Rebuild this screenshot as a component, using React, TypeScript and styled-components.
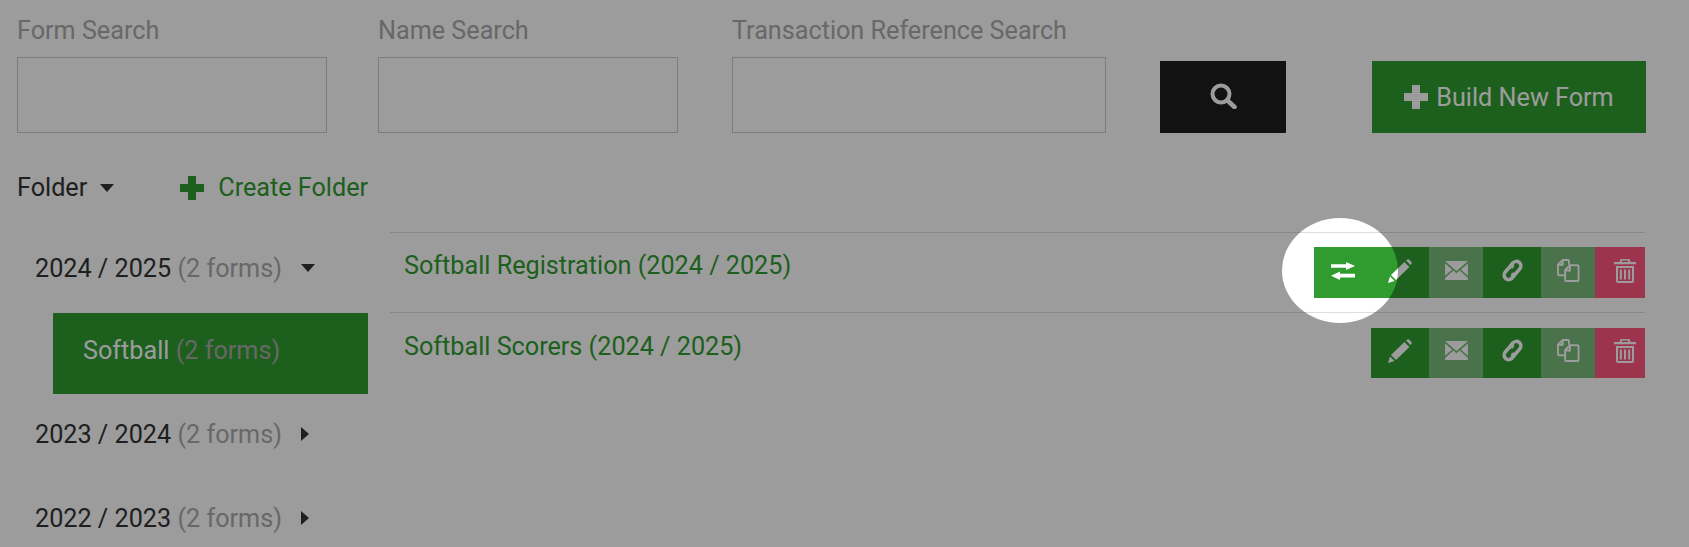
import React from "react";
import styled, { createGlobalStyle } from "styled-components";

const GlobalStyle = createGlobalStyle`
  html, body { margin: 0; padding: 0; background: #fff; }
  body { font-family: Roboto, "Liberation Sans", sans-serif; color: #333; }
`;

const GREEN = "#309c30";

const PlusIcon = ({ size }: { size: number }) => (
  <svg width={size} height={size} viewBox="0 0 24 24" fill="currentColor">
    <path d="M8 0h8v8h8v8h-8v8H8v-8H0V8h8z" />
  </svg>
);

const SearchIcon = () => (
  <svg width="27" height="26" viewBox="0 0 27 26" fill="none" stroke="currentColor">
    <circle cx="11" cy="11" r="8.500" strokeWidth="4" />
    <path d="M18 18l6.500 6" strokeWidth="4.600" strokeLinecap="round" />
  </svg>
);

const TransferIcon = () => (
  <svg width="24" height="18" viewBox="0 0 24 18" fill="currentColor">
    <path d="M0 2.200h15V0l9 4-9 4V5.800H0zM24 11.700H9V9.500L0 13.700l9 4.300v-2.500h15z" />
  </svg>
);

const PencilIcon = () => (
  <svg width="24" height="24" viewBox="0 0 24 24" fill="currentColor">
    <path d="M18 1.600l1.400-1a1.600 1.600 0 0 1 2 .2l2 2.200a1.400 1.400 0 0 1 0 1.900l-1 1.200zM16.400 3l5 5L8 21l-5-5zM2 17.600L6.600 22 0 24z" />
  </svg>
);

const MailIcon = () => (
  <svg width="23" height="19" viewBox="0 0 24 20" fill="currentColor">
    <path d="M0 0h24L12 10.500zM0 2.500l7.400 6.400L0 15.500zM24 2.500v13l-7.400-6.600zM8.600 10L12 13l3.400-3L24 18v2H0v-2z" />
  </svg>
);

const LinkIcon = () => (
  <svg width="27" height="27" viewBox="0 0 27 27" fill="none" stroke="currentColor" strokeWidth="3.600">
    <g transform="rotate(40 13.500 13.500)">
      <path d="M9 12V7.500a4.500 4.500 0 0 1 9 0v5.500a4.500 4.500 0 0 1-3 4.200" />
      <path d="M18 15v4.500a4.500 4.500 0 0 1-9 0V14a4.500 4.500 0 0 1 3-4.200" />
    </g>
  </svg>
);

const CopyIcon = () => (
  <svg width="24" height="23" viewBox="0 0 24 24" fill="none" stroke="currentColor" strokeWidth="2">
    <path d="M9 17H2.500a1 1 0 0 1-1-1V6l5-5h5.500a1 1 0 0 1 1 1v4M6.500 1.500V6H2" />
    <path d="M10 23a1 1 0 0 1-1-1V11.500l5-5h8a1 1 0 0 1 1 1V22a1 1 0 0 1-1 1zM14 7v5H9.500" />
  </svg>
);

const TrashIcon = () => (
  <svg width="22" height="24" viewBox="0 0 22 24" fill="currentColor">
    <path d="M6.500 0h9l1 3H22v2.200H0V3h5.500zM8 1.500L7.600 3h6.800L14 1.500zM2 7h18v15a2 2 0 0 1-2 2H4a2 2 0 0 1-2-2zm2 2v12.500a.5.5 0 0 0 .5.5h13a.5.5 0 0 0 .5-.5V9zm1.800 1.500h2v10h-2zm4.200 0h2v10h-2zm4.200 0h2v10h-2z" />
  </svg>
);

const Page = styled.div`
  position: relative;
  height: 547px;
  overflow: hidden;
  padding: 0 43px 0 17px;
`;

const SearchBar = styled.form`
  display: flex;
  align-items: flex-end;
  height: 133px;
`;

const Field = styled.div<{ $width: number; $gap: number }>`
  width: ${(p) => p.$width}px;
  margin-right: ${(p) => p.$gap}px;
`;

const Label = styled.label`
  display: block;
  font-size: 25.200px;
  line-height: 28px;
  color: #aaa;
  margin-bottom: 12px;
`;

const Input = styled.input`
  display: block;
  box-sizing: border-box;
  width: 100%;
  height: 76px;
  border: 1px solid #ccc;
  background: #fff;
`;

const SearchButton = styled.button`
  display: flex;
  align-items: center;
  justify-content: center;
  width: 126px;
  height: 72px;
  margin-right: 86px;
  padding: 0 0 3px;
  border: 0;
  background: #1e1e1e;
  color: #fff;
`;

const BuildButton = styled.button`
  display: flex;
  align-items: center;
  justify-content: center;
  gap: 8px;
  width: 274px;
  height: 72px;
  padding: 0;
  border: 0;
  background: ${GREEN};
  color: #fff;
  font: 25.200px Roboto, sans-serif;
`;

const Layout = styled.div`
  display: grid;
  grid-template-columns: 373px 1fr;
`;

const FolderHeader = styled.div`
  grid-column: 1 / 3;
  display: flex;
  align-items: center;
  box-sizing: border-box;
  height: 99px;
  padding-top: 10px;
  font-size: 25.200px;
`;

const Caret = styled.span<{ $right?: boolean }>`
  display: inline-block;
  width: 0;
  height: 0;
  ${(p) =>
    p.$right
      ? "border-top: 7px solid transparent; border-bottom: 7px solid transparent; border-left: 8px solid #333;"
      : "border-left: 7px solid transparent; border-right: 7px solid transparent; border-top: 8px solid #333;"}
`;

const FolderToggle = styled.span`
  display: flex;
  align-items: center;
  gap: 13px;
  margin-right: 66px;
`;

const CreateFolder = styled.a`
  display: flex;
  align-items: center;
  gap: 14px;
  color: ${GREEN};
`;

const Tree = styled.ul`
  list-style: none;
  margin: -6px 0 0;
  padding: 0;
`;

const TreeRow = styled.li`
  display: flex;
  align-items: center;
  gap: 19px;
  height: 84px;
  padding-left: 18px;
  font-size: 25.200px;
`;

const Count = styled.span`
  color: #aaa;
`;

const ActiveFolder = styled.li`
  display: flex;
  align-items: center;
  box-sizing: border-box;
  height: 81px;
  margin: 3px 0 -2px 36px;
  width: 315px;
  padding: 0 0 6px 30px;
  background: ${GREEN};
  color: #fff;
  font-size: 25.200px;
`;

const FormList = styled.div`
  display: flex;
  flex-direction: column;
  margin-right: 1px;
`;

const FormRow = styled.div`
  display: flex;
  justify-content: space-between;
  box-sizing: border-box;
  height: 80.300px;
  padding-top: 14.400px;
  border-top: 1px solid #ddd;
`;

const FormTitle = styled.a`
  margin-left: 14px;
  font-size: 25.200px;
  line-height: 38px;
  color: ${GREEN};
`;

const Actions = styled.div`
  display: flex;
  height: 50.600px;
`;

const Action = styled.button<{ $bg: string; $width: number; $shift?: number }>`
  display: flex;
  align-items: center;
  justify-content: center;
  box-sizing: border-box;
  width: ${(p) => p.$width}px;
  padding: 0 0 4px ${(p) => p.$shift || 0}px;
  border: 0;
  background: ${(p) => p.$bg};
  color: #fff;
`;

const Spotlight = styled.div`
  position: absolute;
  left: 1282px;
  top: 218px;
  width: 116px;
  height: 105px;
  border-radius: 50%;
  box-shadow: 0 0 0 2000px rgba(0, 0, 0, 0.39);
  pointer-events: none;
`;

const ActionButtons = ({ transfer }: { transfer?: boolean }) => (
  <Actions>
    {transfer && (
      <Action $bg={GREEN} $width={57} type="button">
        <TransferIcon />
      </Action>
    )}
    <Action $bg={GREEN} $width={58} type="button">
      <PencilIcon />
    </Action>
    <Action $bg="#7bbd7b" $width={54} type="button">
      <MailIcon />
    </Action>
    <Action $bg={GREEN} $width={58} type="button">
      <LinkIcon />
    </Action>
    <Action $bg="#7bbd7b" $width={54} type="button">
      <CopyIcon />
    </Action>
    <Action $bg="#ff5680" $width={50} $shift={10} type="button">
      <TrashIcon />
    </Action>
  </Actions>
);

export default function App() {
  return (
    <Page>
      <GlobalStyle />
      <SearchBar>
        <Field $width={310} $gap={51}>
          <Label>Form Search</Label>
          <Input />
        </Field>
        <Field $width={300} $gap={54}>
          <Label>Name Search</Label>
          <Input />
        </Field>
        <Field $width={374} $gap={54}>
          <Label>Transaction Reference Search</Label>
          <Input />
        </Field>
        <SearchButton type="button">
          <SearchIcon />
        </SearchButton>
        <BuildButton type="button">
          <PlusIcon size={24} />
          Build New Form
        </BuildButton>
      </SearchBar>
      <Layout>
        <FolderHeader>
          <FolderToggle>
            Folder <Caret />
          </FolderToggle>
          <CreateFolder>
            <PlusIcon size={24} />
            Create Folder
          </CreateFolder>
        </FolderHeader>
        <Tree>
          <TreeRow>
            <span>
              2024 / 2025 <Count>(2 forms)</Count>
            </span>
            <Caret />
          </TreeRow>
          <ActiveFolder>
            <span>
              Softball <Count>(2 forms)</Count>
            </span>
          </ActiveFolder>
          <TreeRow>
            <span>
              2023 / 2024 <Count>(2 forms)</Count>
            </span>
            <Caret $right />
          </TreeRow>
          <TreeRow>
            <span>
              2022 / 2023 <Count>(2 forms)</Count>
            </span>
            <Caret $right />
          </TreeRow>
        </Tree>
        <FormList>
          <FormRow>
            <FormTitle>Softball Registration (2024 / 2025)</FormTitle>
            <ActionButtons transfer />
          </FormRow>
          <FormRow>
            <FormTitle>Softball Scorers (2024 / 2025)</FormTitle>
            <ActionButtons />
          </FormRow>
        </FormList>
      </Layout>
      <Spotlight />
    </Page>
  );
}
